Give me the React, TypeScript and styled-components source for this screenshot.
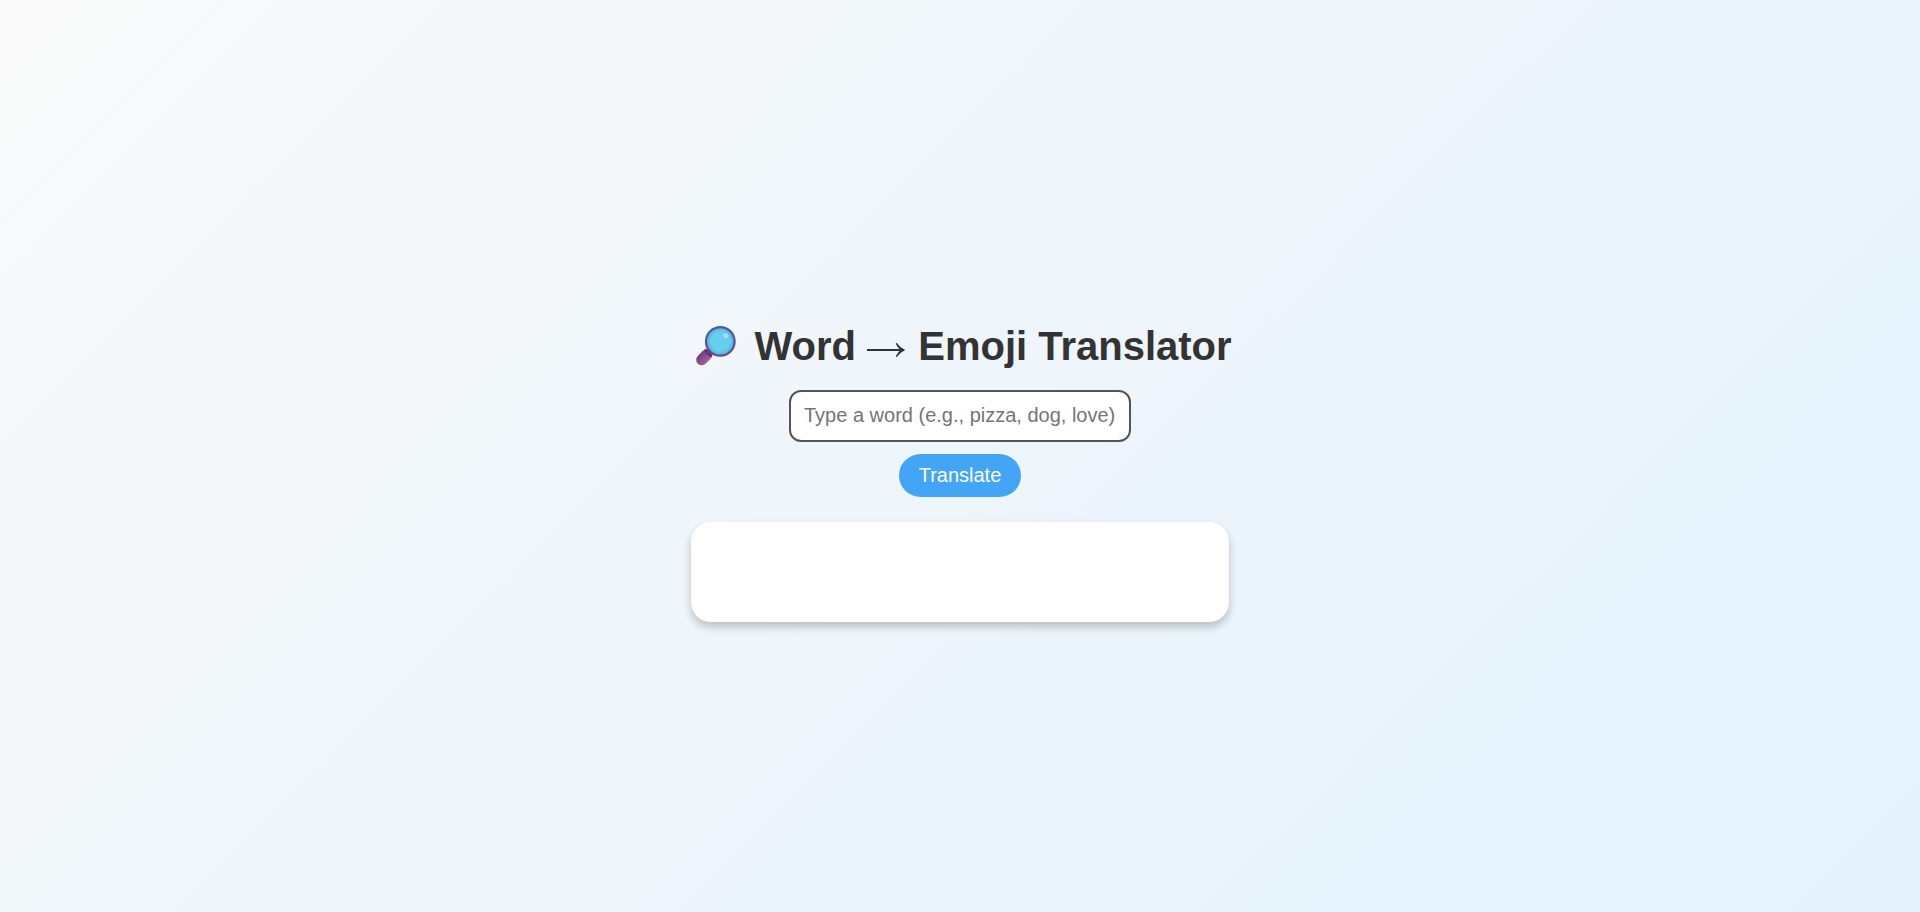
import React, { useState } from "react";
import styled, { createGlobalStyle } from "styled-components";

const GlobalStyle = createGlobalStyle`
  * { box-sizing: border-box; }
  body {
    margin: 0;
    font-family: "Liberation Sans", Arial, sans-serif;
    color: #333;
  }
`;

const Page = styled.main`
  min-height: 100vh;
  display: flex;
  flex-direction: column;
  align-items: center;
  justify-content: center;
  background: linear-gradient(135deg, #f9f9f9, #e3f2fd);
`;

const Title = styled.h1`
  margin: 33px 0 21px;
  font-size: 40px;
  line-height: 46px;
  font-weight: 700;
  text-align: center;
`;

const Arrow = styled.svg`
  width: 40px;
  height: 16px;
  vertical-align: 2px;
`;

const Lens = styled.svg`
  width: 40px;
  height: 41px;
  margin: 0 7px 0 8px;
  vertical-align: -6px;
`;

const Form = styled.form`
  display: flex;
  flex-direction: column;
  align-items: center;
  gap: 12px;
`;

const WordInput = styled.input`
  width: 342px;
  max-width: 90vw;
  height: 52px;
  padding: 0 13px 2px;
  border: 2px solid #555;
  border-radius: 12px;
  background: #fff;
  color: #333;
  font-family: inherit;
  font-size: 20px;
  outline: none;

  &::placeholder { color: #757575; }
`;

const TranslateButton = styled.button`
  padding: 10px 20px;
  border: none;
  border-radius: 24px;
  background: #42a5f5;
  color: #fff;
  font-family: inherit;
  font-size: 20px;
  line-height: 23px;
  cursor: pointer;
`;

const Result = styled.output`
  display: flex;
  align-items: center;
  justify-content: center;
  width: 28%;
  min-width: 300px;
  min-height: 100px;
  margin-top: 25px;
  border-radius: 20px;
  background: #fff;
  box-shadow: 0 5px 8px rgba(0, 0, 0, 0.22);
  font-size: 48px;
`;

const emojis: Record<string, string> = { pizza: "🍕", dog: "🐶", love: "❤️" };

function MagnifyingGlass() {
  return (
    <Lens viewBox="0 0 40 41" aria-hidden="true">
      <defs>
        <linearGradient id="rim" x1="0" y1="0" x2="0" y2="1">
          <stop offset="0" stopColor="#485c98" />
          <stop offset="1" stopColor="#754681" />
        </linearGradient>
        <linearGradient id="handle" gradientUnits="userSpaceOnUse" x1="3" y1="29" x2="12" y2="38">
          <stop offset="0" stopColor="#6d3c7c" />
          <stop offset="1" stopColor="#a865a0" />
        </linearGradient>
        <radialGradient id="glass">
          <stop offset="0.7" stopColor="#65d0ed" />
          <stop offset="1" stopColor="#50b5e5" />
        </radialGradient>
        <linearGradient id="shine" x1="0" y1="0" x2="1" y2="1">
          <stop offset="0" stopColor="#a4e4f5" />
          <stop offset="1" stopColor="#b8d3f3" />
        </linearGradient>
      </defs>
      <path d="M5.7 34.8L10.5 30" stroke="url(#handle)" strokeWidth="11" strokeLinecap="round" />
      <path d="M8 24.8Q11 22.8 14.2 26Q17.6 29 15.8 32.2Q10 31.4 8 24.8Z" fill="#653673" />
      <circle cx="24.3" cy="16.4" r="15.4" fill="url(#rim)" />
      <circle cx="24.3" cy="16.4" r="13.2" fill="url(#glass)" />
      <circle cx="29.9" cy="10.7" r="2.5" fill="url(#shine)" />
    </Lens>
  );
}

export default function App() {
  const [word, setWord] = useState("");
  const [result, setResult] = useState("");

  const translate = (event: React.FormEvent) => {
    event.preventDefault();
    setResult(emojis[word.trim().toLowerCase()] ?? "");
  };

  return (
    <>
      <GlobalStyle />
      <Page>
        <Title>
          <MagnifyingGlass /> Word{" "}
          <Arrow viewBox="0 0 40 16" role="img" aria-label="to">
            <path d="M0 7H32.5Q30.3 4.8 28.6 1.4L29.8 .9Q33 5.5 38.2 8Q33 10.5 29.8 15.1L28.6 14.6Q30.3 11.2 32.5 9H0Z" fill="#333" />
          </Arrow>{" "}
          Emoji Translator
        </Title>
        <Form onSubmit={translate}>
          <WordInput
            type="text"
            aria-label="Word to translate"
            placeholder="Type a word (e.g., pizza, dog, love)"
            value={word}
            onChange={(event) => setWord(event.target.value)}
          />
          <TranslateButton type="submit">Translate</TranslateButton>
        </Form>
        <Result aria-live="polite">{result}</Result>
      </Page>
    </>
  );
}
